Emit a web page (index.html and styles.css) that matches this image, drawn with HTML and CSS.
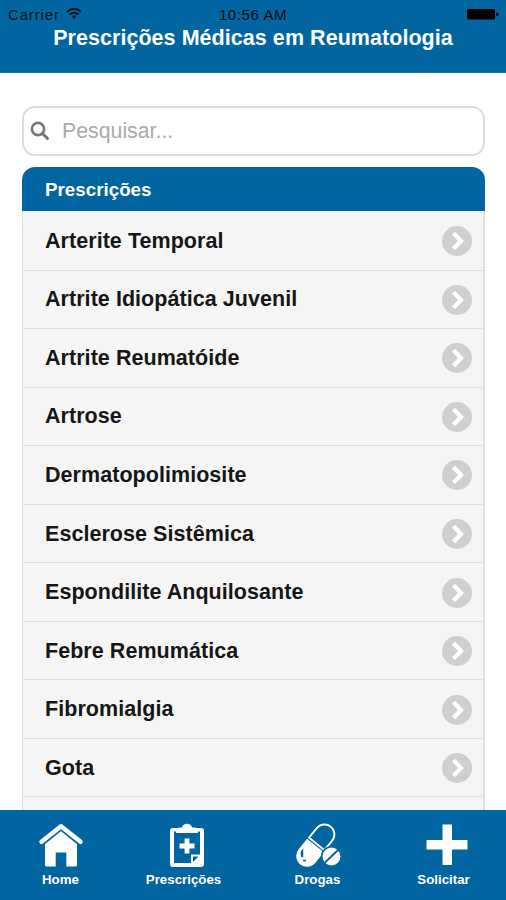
FILE: index.html
```html
<!DOCTYPE html>
<html lang="pt">
<head>
<meta charset="utf-8">
<title>Prescrições Médicas em Reumatologia</title>
<link rel="stylesheet" href="styles.css">
</head>
<body>
<svg class="defs" aria-hidden="true">
  <symbol id="chevron" viewBox="0 0 30 30">
    <circle cx="15" cy="15" r="15" fill="#cfcfcf"/>
    <path d="M11.500 7.200 19 15 11.500 22.800" fill="none" stroke="#fff" stroke-width="4.300"/>
  </symbol>
</svg>
<header class="top">
  <div class="status">
    <div class="carrier"><span>Carrier</span>
      <svg class="wifi" viewBox="0 0 16 13"><path d="M1 4.9Q8-1.2 15 4.9M3.5 7.6Q8 3.8 12.5 7.6" fill="none" stroke="#07131c" stroke-width="1.9"/><path d="M5.5 9.4Q8 7.5 10.5 9.4L8 12Z" fill="#07131c"/></svg>
    </div>
    <div class="clock">10:56 AM</div>
    <svg class="battery" viewBox="0 0 34 13"><rect x="1" y="1" width="28" height="10.5" rx="1.5" fill="#000"/><path d="M30 4.2Q33 4.5 33 6.2 33 8 30 8.3Z" fill="#001c30"/></svg>
  </div>
  <h1>Prescrições Médicas em Reumatologia</h1>
</header>
<main class="content">
  <div class="search">
    <svg viewBox="0 0 20 20"><circle cx="8" cy="8" r="6.1" fill="none" stroke="#777" stroke-width="2.6"/><path d="m12.5 12.5 5 5" stroke="#777" stroke-width="3" stroke-linecap="round"/></svg>
    <span>Pesquisar...</span>
  </div>
  <section class="list">
    <h2>Prescrições</h2>
    <ul>
      <li><span>Arterite Temporal</span><svg><use href="#chevron"/></svg></li>
      <li><span>Artrite Idiopática Juvenil</span><svg><use href="#chevron"/></svg></li>
      <li><span>Artrite Reumatóide</span><svg><use href="#chevron"/></svg></li>
      <li><span>Artrose</span><svg><use href="#chevron"/></svg></li>
      <li><span>Dermatopolimiosite</span><svg><use href="#chevron"/></svg></li>
      <li><span>Esclerose Sistêmica</span><svg><use href="#chevron"/></svg></li>
      <li><span>Espondilite Anquilosante</span><svg><use href="#chevron"/></svg></li>
      <li><span>Febre Remumática</span><svg><use href="#chevron"/></svg></li>
      <li><span>Fibromialgia</span><svg><use href="#chevron"/></svg></li>
      <li><span>Gota</span><svg><use href="#chevron"/></svg></li>
      <li></li>
    </ul>
  </section>
</main>
<nav class="tabs">
  <div class="tab home">
    <svg viewBox="0 0 46 46"><path d="M7 20 23 6 39 20V42Q39 43.500 37.500 43.500H28.300V29.500H17.700V43.500H8.500Q7 43.500 7 42Z" fill="#fff"/><path d="M3.500 20.300 23 4.600 42.500 20.300" fill="none" stroke="#0065a0" stroke-width="5.500"/><path d="M3.500 18.800 23 3.200 42.500 18.800" fill="none" stroke="#fff" stroke-width="4.500" stroke-linecap="round" stroke-linejoin="round"/></svg>
    <span>Home</span>
  </div>
  <div class="tab rx">
    <svg viewBox="0 0 46 46"><path d="M9 5H37Q40 5 40 8V41Q40 44 37 44H9Q6 44 6 41V8Q6 5 9 5Z" fill="#fff"/><path d="M10 8.500H36V31.500H27V40H10Z" fill="#0065a0"/><path d="M12 10V7.500Q12 4.500 16 4.500H18Q19 .8 23 .8T28 4.500H30Q34 4.500 34 7.500V10Z" fill="#fff"/><path d="M20.600 15.500H25.400V20.600H30.500V25.400H25.400V30.500H20.600V25.400H15.500V20.600H20.600Z" fill="#fff"/><path d="m29 39 5.500-5.500H29Z" fill="#0065a0"/></svg>
    <span>Prescrições</span>
  </div>
  <div class="tab drugs">
    <svg viewBox="0 0 46 46"><g transform="rotate(39 19.500 22.500)"><rect x="9.500" y="-1.800" width="20" height="24" rx="0" fill="none"/><path d="M9.600 20.500V8.200A9.900 9.900 0 0 1 29.400 8.200V20.500Z" fill="#0065a0" stroke="#fff" stroke-width="1.900"/><path d="M8.700 22.500H30.300V36A10.800 10.800 0 0 1 8.700 36Z" fill="#fff"/></g><path d="M6 33.500Q4.500 30 6.500 27.500V33.500ZM7 37.500H10" fill="none" stroke="#0065a0" stroke-width="1.500"/><circle cx="35.500" cy="33.500" r="9.800" fill="#fff" stroke="#0065a0" stroke-width="1.600"/><path d="m29 39.500 13-12.500" stroke="#0065a0" stroke-width="1.800"/></svg>
    <span>Drogas</span>
  </div>
  <div class="tab ask">
    <svg viewBox="0 0 46 46"><path d="M18.500 1.500H28V17H43.500V26.500H28V42H18.500V26.500H2.500V17H18.500Z" fill="#fff"/></svg>
    <span>Solicitar</span>
  </div>
</nav>
</body>
</html>
```
FILE: styles.css
```css
* { box-sizing: border-box; }
body {
  margin: 0;
  height: 900px;
  overflow: hidden;
  display: flex;
  flex-direction: column;
  background: #fff;
  font-family: "Liberation Sans", Arial, sans-serif;
}
.defs { display: none; }
.top {
  flex: none;
  height: 73px;
  background: #0065a0;
  border-bottom: 1px solid #24709f;
  color: #fff;
}
.status {
  height: 27px;
  padding: 6px 6px 0 8px;
  display: grid;
  grid-template-columns: 1fr auto 1fr;
  color: #07131c;
  font-size: 15px;
  line-height: 18px;
  letter-spacing: 0.85px;
}
.carrier { display: flex; gap: 6px; }
.wifi { width: 16px; height: 13px; margin-top: 1px; }
.clock { letter-spacing: 0.6px; color: #02090e; margin-right: 2px; }
.battery { width: 34px; height: 13px; margin-top: 2px; justify-self: end; }
h1 {
  margin: 0;
  font-size: 21.5px;
  line-height: 22px;
  letter-spacing: 0.05px;
  text-align: center;
  white-space: nowrap;
}
.content {
  flex: 1;
  min-height: 0;
  overflow: hidden;
  padding: 33px 21px 0 22px;
}
.search {
  height: 50px;
  display: flex;
  align-items: center;
  gap: 12px;
  padding-left: 6px;
  border: 2px solid #dcdcdc;
  border-radius: 13px;
  color: #aaa;
  font-size: 21.3px;
}
.search svg { width: 20px; height: 20px; }
.list {
  margin-top: 11px;
  border-radius: 13px 13px 0 0;
  overflow: hidden;
}
h2 {
  margin: 0;
  height: 44px;
  padding-left: 23px;
  background: #0065a0;
  color: #fff;
  font-size: 18.8px;
  line-height: 45px;
}
ul {
  margin: 0;
  padding: 1px 0 0;
  list-style: none;
  border: solid #dedede;
  border-width: 0 2px 0 1px;
  background: #f5f5f5;
}
li {
  height: 58.55px;
  padding: 1px 11px 0 22px;
  display: flex;
  align-items: center;
  justify-content: space-between;
  border-bottom: 1px solid #dedede;
  color: #161616;
  font-size: 21.5px;
  font-weight: bold;
  letter-spacing: 0.05px;
}
li svg { width: 30px; height: 30px; }
.tabs {
  flex: none;
  height: 90px;
  padding-top: 13px;
  display: grid;
  grid-template-columns: 121px 125px 143px 109px;
  background: #0065a0;
  color: #fff;
}
.tab {
  display: flex;
  flex-direction: column;
  align-items: center;
  font-size: 13.3px;
  font-weight: bold;
  line-height: 21px;
}
.tab svg { width: 46px; height: 46px; }
.rx svg { margin-left: 7px; }
.drugs svg { margin-left: 3px; }
.ask svg { margin-left: 6px; }
```
